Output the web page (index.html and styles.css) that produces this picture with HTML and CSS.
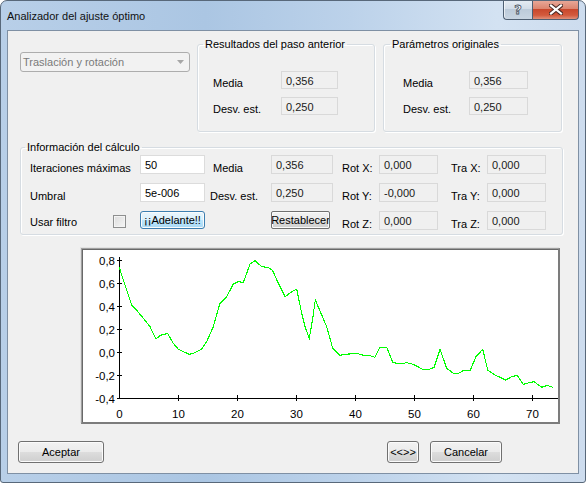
FILE: index.html
```html
<!DOCTYPE html>
<html>
<head>
<meta charset="utf-8">
<link rel="stylesheet" href="styles.css">
</head>
<body>
<div class="window">
  <div class="titlebar">
    <span class="title">Analizador del ajuste óptimo</span>
    <div class="caption-btns">
      <div class="cbtn help"><span>?</span></div>
      <div class="cbtn close">
        <svg width="14" height="11" viewBox="0 0 14 11">
          <path d="M2 1.5 L12 9.5 M12 1.5 L2 9.5" stroke="#4a2a25" stroke-width="4.2" stroke-linecap="square"/>
          <path d="M2 1.5 L12 9.5 M12 1.5 L2 9.5" stroke="#ffffff" stroke-width="2.2" stroke-linecap="square"/>
        </svg>
      </div>
    </div>
  </div>
  <div class="client">
    <div class="top-row">
      <div class="combo">
        <span>Traslación y rotación</span>
        <svg class="arrow" width="7" height="4" viewBox="0 0 7 4"><path d="M0 0 H7 L3.5 4 Z" fill="#a6a6a6"/></svg>
      </div>
      <fieldset class="group g1">
        <legend>Resultados del paso anterior</legend>
        <div class="pair"><span class="lbl">Media</span><span class="ro">0,356</span></div>
        <div class="pair"><span class="lbl">Desv. est.</span><span class="ro">0,250</span></div>
      </fieldset>
      <fieldset class="group g2">
        <legend>Parámetros originales</legend>
        <div class="pair"><span class="lbl">Media</span><span class="ro">0,356</span></div>
        <div class="pair"><span class="lbl">Desv. est.</span><span class="ro">0,250</span></div>
      </fieldset>
    </div>

    <fieldset class="group g3">
      <legend>Información del cálculo</legend>
      <div class="calc-grid">
        <span class="glbl">Iteraciones máximas</span>
        <span class="edit">50</span>
        <span class="glbl p8">Media</span>
        <span class="ro">0,356</span>
        <span class="glbl p9">Rot X:</span>
        <span class="ro">0,000</span>
        <span class="glbl p13">Tra X:</span>
        <span class="ro">0,000</span>

        <span class="glbl">Umbral</span>
        <span class="edit">5e-006</span>
        <span class="glbl p5">Desv. est.</span>
        <span class="ro">0,250</span>
        <span class="glbl p9">Rot Y:</span>
        <span class="ro">-0,000</span>
        <span class="glbl p13">Tra Y:</span>
        <span class="ro">0,000</span>

        <div class="filter-cell"><span class="glbl up">Usar filtro</span><span class="check"></span></div>
        <span class="btn hot small">¡¡Adelante!!</span>
        <span></span>
        <span class="btn small reset">Restablecer</span>
        <span class="glbl p9">Rot Z:</span>
        <span class="ro">0,000</span>
        <span class="glbl p13">Tra Z:</span>
        <span class="ro">0,000</span>
      </div>
    </fieldset>

    <div class="chart">
      <svg width="476" height="173" viewBox="82 249 476 173">
        <g stroke="#000" stroke-width="1" shape-rendering="crispEdges">
          <line x1="119.5" y1="257" x2="119.5" y2="399"/>
          <line x1="119" y1="398.5" x2="558" y2="398.5"/>
          <line x1="117" y1="260.5" x2="122" y2="260.5"/>
          <line x1="117" y1="283.5" x2="122" y2="283.5"/>
          <line x1="117" y1="306.5" x2="122" y2="306.5"/>
          <line x1="117" y1="329.5" x2="122" y2="329.5"/>
          <line x1="117" y1="352.5" x2="122" y2="352.5"/>
          <line x1="117" y1="375.5" x2="122" y2="375.5"/>
          <line x1="117" y1="398.5" x2="122" y2="398.5"/>
          <line x1="178.5" y1="395" x2="178.5" y2="401"/>
          <line x1="237.5" y1="395" x2="237.5" y2="401"/>
          <line x1="296.5" y1="395" x2="296.5" y2="401"/>
          <line x1="355.5" y1="395" x2="355.5" y2="401"/>
          <line x1="414.5" y1="395" x2="414.5" y2="401"/>
          <line x1="473.5" y1="395" x2="473.5" y2="401"/>
          <line x1="532.5" y1="395" x2="532.5" y2="401"/>
        </g>
        <g class="ylab" text-anchor="end">
          <text x="115" y="265">0,8</text>
          <text x="115" y="288">0,6</text>
          <text x="115" y="311">0,4</text>
          <text x="115" y="334">0,2</text>
          <text x="115" y="357">0,0</text>
          <text x="115" y="380">-0,2</text>
          <text x="115" y="403">-0,4</text>
        </g>
        <g class="xlab" text-anchor="middle">
          <text x="119.5" y="418">0</text>
          <text x="178.5" y="418">10</text>
          <text x="237.5" y="418">20</text>
          <text x="296.5" y="418">30</text>
          <text x="355.5" y="418">40</text>
          <text x="414.5" y="418">50</text>
          <text x="473.5" y="418">60</text>
          <text x="532.5" y="418">70</text>
        </g>
        <polyline fill="none" stroke="#00ff00" stroke-width="1.1" shape-rendering="crispEdges"
          points="119.3,267.3 123.3,280 131.7,305 135,308.3 143.3,318.3 150,326.7 156,339 160,335.7 163.3,334.3 167.7,333.7 173.3,343.3 178.3,349.3 183.3,351.7 189.3,354.3 195,352.7 201.7,349 206.7,341.7 213.3,326.7 220,303.3 226.7,296.7 233.3,284 238.3,281.7 243.3,282.3 246.7,273.3 250,264 255,260.7 261.7,266.7 266.7,267.3 268.3,267.3 272.7,270.7 278.3,283.3 285,296.7 291.7,291.7 296.7,289.3 301.7,313.3 305,326.7 309.3,338.3 312.7,318.3 315.3,300 321.7,315 326.7,326.7 332.7,348.3 340,355.3 348.3,354 358.3,353.7 363.3,355.3 370,355.7 375,357.3 380,347.3 386.7,347.3 392.7,362.3 400,364 406.7,362.7 413.3,364.3 422.7,369.3 429.3,369.3 434,367.3 440,349.3 446.7,368.3 453.3,373.3 458.3,373.3 463.3,370.7 470,370.7 476,356.7 482.7,349.3 487.7,370 495,375 505.7,380 511.7,376.7 517.3,375.3 523.3,384.3 529.3,382.7 534,381.7 541.7,387.3 547.3,385.3 552.7,387.3"/>
      </svg>
    </div>

    <div class="bottom-row">
      <span class="btn big accept">Aceptar</span>
      <span class="btn big swap">&lt;&lt;&gt;&gt;</span>
      <span class="btn big cancel">Cancelar</span>
    </div>
  </div>
</div>
</body>
</html>
```

FILE: styles.css
```css
* { box-sizing: border-box; }
html, body { margin: 0; padding: 0; }
body {
  width: 586px;
  height: 483px;
  overflow: hidden;
  font-family: "Liberation Sans", Arial, sans-serif;
  font-size: 11px;
  color: #000;
  background: #ffffff;
}
.window {
  width: 586px;
  height: 483px;
  border: 1px solid #58687a;
  border-radius: 7px 7px 3px 3px;
  background: linear-gradient(90deg, #b8cfe8 0%, #abc6e3 35%, #bcd2ea 60%, #d3e2f2 85%, #cddcee 100%);
  display: flex;
  flex-direction: column;
  overflow: hidden;
}
.titlebar {
  height: 29px;
  flex: none;
  display: flex;
  align-items: flex-start;
  padding-left: 6px;
  padding-right: 6px;
}
.title {
  flex: 1;
  font-size: 11px;
  color: #111;
  line-height: 14px;
  margin-top: 8px;
}
.caption-btns {
  display: flex;
  margin-top: -1px;
}
.cbtn {
  height: 20px;
  display: flex;
  align-items: center;
  justify-content: center;
  border: 1px solid #4e5f72;
  border-top: none;
}
.help {
  width: 29px;
  border-radius: 0 0 0 4px;
  border-right: none;
  background: linear-gradient(#e6edf4 0%, #d3dde8 45%, #bccbda 50%, #c8d5e2 100%);
  box-shadow: inset 1px 0 0 rgba(255,255,255,0.6);
}
.help span {
  font-family: "DejaVu Sans", sans-serif;
  font-weight: bold;
  font-size: 13px;
  color: #fff;
  -webkit-text-stroke: 0.8px #45515e;
  line-height: 14px;
}
.close {
  width: 47px;
  border-radius: 0 0 4px 0;
  background: linear-gradient(#e9ab9c 0%, #dc8670 45%, #c9482d 50%, #d35a3c 80%, #e0907a 100%);
}
.client {
  flex: 1;
  margin: 0 6px 8px 6px;
  border: 1px solid #7f90a4;
  background: #f0f0f0;
  display: flex;
  flex-direction: column;
}
.top-row {
  display: flex;
  align-items: flex-start;
  margin-top: 6px;
  padding-left: 12px;
}
.combo {
  width: 170px;
  height: 20px;
  margin-top: 15px;
  border: 1px solid #adadad;
  border-radius: 3px;
  background: #f2f2f2;
  display: flex;
  align-items: center;
  padding-left: 2px;
  padding-right: 5px;
  color: #7a7a7a;
}
.combo span { flex: 1; line-height: 14px; }
.group {
  margin: 0;
  padding: 0;
  border: 1px solid #d6dce2;
  border-radius: 3px;
  box-shadow: inset 1px 1px 0 #ffffff, 1px 1px 0 #ffffff;
  min-width: 0;
}
.group legend {
  padding: 0 2px;
  line-height: 14px;
  color: #000;
}
.g1 { width: 178px; margin-left: 7px; padding: 20px 0 16px 15px; }
.g1 legend { margin-left: -10px; }
.g2 { width: 179px; margin-left: 8px; padding: 20px 0 16px 19px; }
.g2 legend { margin-left: -13px; }
.pair { display: flex; height: 18px; }
.pair + .pair { margin-top: 8px; }
.lbl { padding-top: 5px; line-height: 14px; }
.g1 .lbl { width: 68px; }
.g1 .ro { width: 57px; }
.g2 .lbl { width: 66px; }
.g2 .ro { width: 59px; }
.ro {
  display: block;
  height: 18px;
  border: 1px solid #d9d9d9;
  background: #f0f0f0;
  padding: 2px 4px 0 4px;
  line-height: 14px;
  color: #1a1a1a;
  white-space: nowrap;
}
.g3 {
  width: 543px;
  margin-top: 8px;
  margin-left: 12px;
  padding: 1px 0 4px 9px;
}
.g3 legend { margin-left: -5px; }
.calc-grid {
  display: grid;
  grid-template-columns: 110px 65px 66px 62px 46px 59px 49px 59px;
  grid-template-rows: 19px 19px 19px;
  row-gap: 9px;
}
.calc-grid .ro { height: 19px; }
.glbl { padding-top: 6px; line-height: 14px; white-space: nowrap; }
.glbl.up { padding-top: 4px; }
.p5 { padding-left: 5px; }
.p8 { padding-left: 8px; }
.p9 { padding-left: 9px; }
.p13 { padding-left: 13px; }
.edit {
  display: block;
  height: 19px;
  border: 1px solid #dcdcdc;
  background: #ffffff;
  padding: 2px 4px 0 4px;
  line-height: 14px;
}
.filter-cell {
  display: grid;
  grid-template-columns: 83px 13px;
}
.check {
  width: 13px;
  height: 13px;
  margin-top: 4px;
  border: 1px solid #8e8f8f;
  background: linear-gradient(135deg, #dcdcdc, #f6f6f6);
  box-shadow: inset 0 0 0 1px #f4f4f4;
}
.btn {
  display: flex;
  align-items: center;
  justify-content: center;
  border: 1px solid #707070;
  border-radius: 3px;
  background: linear-gradient(#f2f2f2 0%, #ebebeb 49%, #dddddd 50%, #cfcfcf 100%);
  box-shadow: inset 0 0 0 1px #fbfbfb;
  white-space: nowrap;
  overflow: hidden;
  line-height: 14px;
  color: #000;
}
.btn.small { height: 18px; }
.btn.hot {
  border-color: #3c7fb1;
  background: linear-gradient(#eaf6fd 0%, #d9f0fc 49%, #bee6fd 50%, #a7d9f5 100%);
}
.btn.reset { width: 59px; border-radius: 2px; }
.chart {
  width: 479px;
  height: 176px;
  margin-top: 13px;
  margin-left: 73px;
  background: #ffffff;
  border-top: 1px solid #a0a0a0;
  border-left: 1px solid #a0a0a0;
  border-right: 2px solid #7c7c7c;
  border-bottom: 2px solid #7c7c7c;
  box-shadow: inset 1px 1px 0 #696969, -1px -1px 0 #e2e2e2;
}
.chart svg { display: block; }
.chart text {
  font-family: "Liberation Sans", Arial, sans-serif;
  font-size: 11.5px;
  fill: #000;
}
.bottom-row {
  display: flex;
  margin-top: 17px;
  padding-left: 10px;
  padding-right: 76px;
}
.btn.big { height: 22px; }
.accept { width: 86px; }
.swap { width: 32px; margin-left: auto; }
.cancel { width: 72px; margin-left: 11px; }
```
